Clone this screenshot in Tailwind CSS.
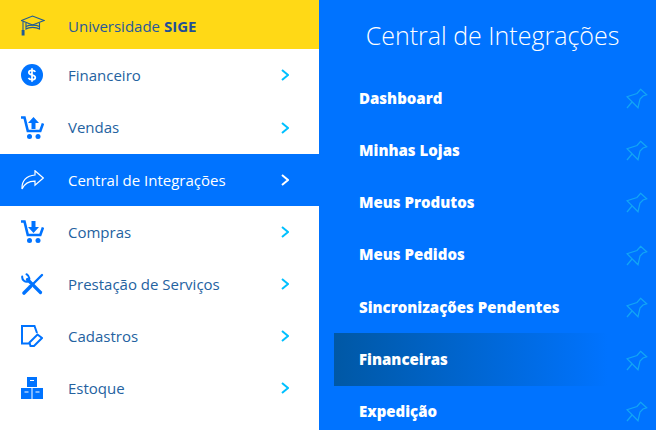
<!DOCTYPE html>
<html lang="pt-BR">
<head>
  <meta charset="UTF-8" />
  <title>Central de Integrações</title>
  <script src="https://cdn.jsdelivr.net/npm/@tailwindcss/browser@4"></script>
</head>
<body class="bg-white font-['Open_Sans',sans-serif]">
  <div class="flex h-[430px] w-[656px] overflow-hidden">
    <!-- menu principal -->
    <nav class="w-[319px] shrink-0 bg-white text-[15px] text-[#24629f]">
      <a class="flex h-[49px] items-center bg-[#ffd916] pl-[21px] text-[#28589a]">
        <svg class="h-[24px] w-[24px]" viewBox="0 0 24 24" fill="none" stroke="#1f5a96" stroke-width="1.100">
          <path d="M.5 7.500 11.500 3 23 7.500 11.500 12Z" />
          <path d="M5 10v6c3-2.200 10-2.200 13.500 0v-6" />
          <path d="M5 13.500c3-1.800 10-1.800 13.500 0" />
          <path d="M2 8.500v9" />
          <path d="M1.200 17.500h1.800v4.500H1.200Z" fill="#1f5a96" />
        </svg>
        <span class="ml-[23px] mt-[3px]">Universidade <b class="font-bold text-[#1f4f96]">SIGE</b></span>
      </a>

      <a class="flex h-[53px] items-center pb-[1px] pl-[21px]">
        <svg class="h-[22px] w-[22px]" viewBox="0 0 22 22">
          <circle cx="11" cy="11" r="11" fill="#0073ff" />
          <path d="M14.300 7.800C13.800 6.800 12.600 6.300 11 6.300c-1.900 0-3.200.9-3.200 2.300 0 3.200 6.500 1.600 6.500 4.800 0 1.400-1.400 2.300-3.300 2.300-1.700 0-3-.6-3.500-1.800M11 4.300v13.400" fill="none" stroke="#fff" stroke-width="1.700" />
        </svg>
        <span class="ml-[25px] flex-1">Financeiro</span>
        <svg class="mr-[30px] h-3 w-2" viewBox="0 0 8 12" fill="none" stroke="#00c0ff" stroke-width="2"><path d="M1 1l6 5-6 5" /></svg>
      </a>

      <a class="flex h-[52px] items-center pb-[1px] pl-[21px]">
        <svg class="h-[24px] w-[23px]" viewBox="0 0 23 24" fill="#0073ff">
          <path d="M0 1.500h3.500l3.300 13.500h12.500L22 7.500" fill="none" stroke="#0073ff" stroke-width="2.600" />
          <path d="M12.500 1l5.500 6h-3.500v6h-4V7H7Z" />
          <circle cx="8.500" cy="20.500" r="2.500" />
          <circle cx="17" cy="20.500" r="2.500" />
        </svg>
        <span class="ml-[24px] flex-1">Vendas</span>
        <svg class="mr-[30px] h-3 w-2" viewBox="0 0 8 12" fill="none" stroke="#00c0ff" stroke-width="2"><path d="M1 1l6 5-6 5" /></svg>
      </a>

      <a class="flex h-[52px] items-center bg-[#0073ff] pl-[21px] text-white">
        <svg class="h-[20px] w-[23px]" viewBox="0 0 23 20" fill="none" stroke="#fff" stroke-width="1.200">
          <path d="M14 .8 22.300 8 14 15.200v-4.100C8 11 3.500 13.500 1 19 .5 11 5.500 5.500 14 5Z" />
        </svg>
        <span class="ml-[24px] flex-1">Central de Integrações</span>
        <svg class="mr-[30px] h-3 w-2" viewBox="0 0 8 12" fill="none" stroke="#fff" stroke-width="2"><path d="M1 1l6 5-6 5" /></svg>
      </a>

      <a class="flex h-[52px] items-center pl-[21px]">
        <svg class="h-[24px] w-[23px]" viewBox="0 0 23 24" fill="#0073ff">
          <path d="M0 1.500h3.500l3.300 13.500h12.500L22 7.500" fill="none" stroke="#0073ff" stroke-width="2.600" />
          <path d="M12.500 13 7 7h3.500V1h4v6H18Z" />
          <circle cx="8.500" cy="20.500" r="2.500" />
          <circle cx="17" cy="20.500" r="2.500" />
        </svg>
        <span class="ml-[24px] flex-1">Compras</span>
        <svg class="mr-[30px] h-3 w-2" viewBox="0 0 8 12" fill="none" stroke="#00c0ff" stroke-width="2"><path d="M1 1l6 5-6 5" /></svg>
      </a>

      <a class="flex h-[52px] items-center pl-[21px]">
        <svg class="h-[23px] w-[23px]" viewBox="0 0 23 23" fill="none" stroke="#0073ff" stroke-linecap="round">
          <path d="M6.500 6.500 19.500 19.500" stroke-width="3.200" />
          <path d="M1.200 3.500C.8 7 4.200 9.500 7 8.500 9 7 9 3.500 5.500 1.200" stroke-width="2" />
          <path d="M21 2 11.500 11.500" stroke-width="2.400" />
          <path d="M9.500 13.500 3 20" stroke-width="3.600" />
        </svg>
        <span class="ml-[24px] flex-1">Prestação de Serviços</span>
        <svg class="mr-[30px] h-3 w-2" viewBox="0 0 8 12" fill="none" stroke="#00c0ff" stroke-width="2"><path d="M1 1l6 5-6 5" /></svg>
      </a>

      <a class="flex h-[52px] items-center pl-[21px]">
        <svg class="h-[22px] w-[22px]" viewBox="0 0 22 22" fill="none" stroke="#0073ff" stroke-width="2">
          <path d="M8 18.500H1V1h12.500L16 8" />
          <path d="M8.500 17.500 16.500 9.500l4.500 3.500-8 8H9.500Z" />
        </svg>
        <span class="ml-[25px] flex-1">Cadastros</span>
        <svg class="mr-[30px] h-3 w-2" viewBox="0 0 8 12" fill="none" stroke="#00c0ff" stroke-width="2"><path d="M1 1l6 5-6 5" /></svg>
      </a>

      <a class="flex h-[52px] items-center pl-[21px]">
        <svg class="h-[22px] w-[22px]" viewBox="0 0 22 22" fill="#0073ff">
          <path d="M6 0h10v10H6ZM0 11h10.500v11H0ZM11.500 11H22v11H11.500Z" />
          <path d="M9 3.500h4M3.500 15h4M14.500 15h4" stroke="#fff" stroke-width="1" />
        </svg>
        <span class="ml-[25px] flex-1">Estoque</span>
        <svg class="mr-[30px] h-3 w-2" viewBox="0 0 8 12" fill="none" stroke="#00c0ff" stroke-width="2"><path d="M1 1l6 5-6 5" /></svg>
      </a>
    </nav>

    <!-- submenu -->
    <section class="flex-1 bg-[#0073ff] text-white">
      <h1 class="flex h-[72px] items-center justify-center pb-[2px] pl-[10px] text-[25px] leading-none font-light">Central de Integrações</h1>
      <ul class="text-[15px] font-extrabold">
        <li class="flex h-[52px] items-center pl-[40px] pr-[8px]"><span class="flex-1">Dashboard</span>
          <svg class="h-[22px] w-[22px]" viewBox="0 0 22 22" fill="none" stroke="#12a6f5" stroke-width="1.200"><path d="M14.600 2.300 20.700 7.700 17 9 14 12 12 20.700 1 9.700 11 6.500Z" /><path d="M6 15 1 21" /></svg></li>
        <li class="flex h-[52px] items-center pl-[40px] pr-[8px]"><span class="flex-1">Minhas Lojas</span>
          <svg class="h-[22px] w-[22px]" viewBox="0 0 22 22" fill="none" stroke="#12a6f5" stroke-width="1.200"><path d="M14.600 2.300 20.700 7.700 17 9 14 12 12 20.700 1 9.700 11 6.500Z" /><path d="M6 15 1 21" /></svg></li>
        <li class="flex h-[52px] items-center pl-[40px] pr-[8px]"><span class="flex-1">Meus Produtos</span>
          <svg class="h-[22px] w-[22px]" viewBox="0 0 22 22" fill="none" stroke="#12a6f5" stroke-width="1.200"><path d="M14.600 2.300 20.700 7.700 17 9 14 12 12 20.700 1 9.700 11 6.500Z" /><path d="M6 15 1 21" /></svg></li>
        <li class="flex h-[53px] items-center pl-[40px] pr-[8px]"><span class="flex-1">Meus Pedidos</span>
          <svg class="h-[22px] w-[22px]" viewBox="0 0 22 22" fill="none" stroke="#12a6f5" stroke-width="1.200"><path d="M14.600 2.300 20.700 7.700 17 9 14 12 12 20.700 1 9.700 11 6.500Z" /><path d="M6 15 1 21" /></svg></li>
        <li class="flex h-[52px] items-center pl-[40px] pr-[8px]"><span class="flex-1">Sincronizações Pendentes</span>
          <svg class="h-[22px] w-[22px]" viewBox="0 0 22 22" fill="none" stroke="#12a6f5" stroke-width="1.200"><path d="M14.600 2.300 20.700 7.700 17 9 14 12 12 20.700 1 9.700 11 6.500Z" /><path d="M6 15 1 21" /></svg></li>
        <li class="ml-[15px] flex h-[53px] items-center bg-gradient-to-r from-[#0058a5] to-[#0073ff] to-[85%] pl-[25px] pr-[8px]"><span class="flex-1">Financeiras</span>
          <svg class="h-[22px] w-[22px]" viewBox="0 0 22 22" fill="none" stroke="#12a6f5" stroke-width="1.200"><path d="M14.600 2.300 20.700 7.700 17 9 14 12 12 20.700 1 9.700 11 6.500Z" /><path d="M6 15 1 21" /></svg></li>
        <li class="flex h-[50px] items-center pl-[40px] pr-[8px]"><span class="flex-1">Expedição</span>
          <svg class="h-[22px] w-[22px]" viewBox="0 0 22 22" fill="none" stroke="#12a6f5" stroke-width="1.200"><path d="M14.600 2.300 20.700 7.700 17 9 14 12 12 20.700 1 9.700 11 6.500Z" /><path d="M6 15 1 21" /></svg></li>
      </ul>
    </section>
  </div>
</body>
</html>
